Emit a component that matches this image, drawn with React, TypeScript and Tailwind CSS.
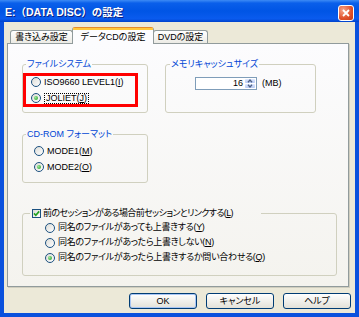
import type { ReactNode } from "react";

const font =
  "font-['Liberation_Sans','Noto_Sans_CJK_JP',sans-serif] [font-feature-settings:'palt']";

function Radio({ checked = false }: { checked?: boolean }) {
  return (
    <span className="flex h-[10px] w-[10px] shrink-0 items-center justify-center rounded-full border border-[#1C5180] bg-gradient-to-br from-[#DCDCD7] to-white">
      {checked && (
        <span className="h-[4px] w-[4px] rounded-full bg-[radial-gradient(circle_at_35%_35%,#9BE89B,#1D9A1D)]" />
      )}
    </span>
  );
}

function Option({
  checked,
  children,
  className = "",
  tight,
}: {
  checked?: boolean;
  children: ReactNode;
  className?: string;
  tight?: boolean;
}) {
  return (
    <div className={`flex items-center gap-[3px] ${className}`}>
      <Radio checked={checked} />
      <span
        className={`whitespace-nowrap text-[9px] leading-[11px] ${tight ? "tracking-[-0.3px]" : ""}`}
      >
        {children}
      </span>
    </div>
  );
}

function Legend({ children }: { children: ReactNode }) {
  return (
    <legend className="ml-[3px] px-[1px] text-[9px] leading-[11px] text-[#0046D5] whitespace-nowrap">
      {children}
    </legend>
  );
}

function Spin({ up }: { up?: boolean }) {
  return (
    <span className="flex flex-1 items-center justify-center rounded-[1px] bg-gradient-to-b from-[#E1EAFE] to-[#B6C9F5]">
      <svg width="6" height="4" viewBox="0 0 6 4">
        <path
          d={up ? "M1 3.2 L3 1 L5 3.2" : "M1 0.8 L3 3 L5 0.8"}
          fill="none"
          stroke="#4D6185"
          strokeWidth="1.3"
        />
      </svg>
    </span>
  );
}

function Button({ children, primary }: { children: ReactNode; primary?: boolean }) {
  return (
    <button
      className={`flex h-[16px] w-[68px] items-center justify-center rounded-[3px] border border-[#003C74] bg-gradient-to-b from-white to-[#E3E1D8] text-[9px] leading-none text-black ${
        primary ? "shadow-[inset_0_0_0_1px_#A9C6F5]" : ""
      }`}
    >
      {children}
    </button>
  );
}

export default function App() {
  return (
    <div className={`flex h-[317px] w-[359px] flex-col bg-[#0A51DD] ${font}`}>
      {/* title bar */}
      <div className="flex h-[22px] shrink-0 items-start justify-between bg-[linear-gradient(to_bottom,#3D8BF5_0%,#0A5FEA_14%,#0055E5_50%,#0A5BEE_85%,#0042CC_100%)] pl-[5px] pr-[5px]">
        <span className="mt-[6px] text-[10.5px] font-bold leading-[12px] text-white [font-feature-settings:normal] [text-shadow:1px_1px_0_#0A1E80]">
          E:（DATA DISC）の設定
        </span>
        <span className="mt-[5px] flex h-[16px] w-[16px] items-center justify-center rounded-[3px] border border-white bg-[radial-gradient(circle_at_30%_30%,#F5A58A,#E0502A_60%,#C43A18)]">
          <svg width="8" height="8" viewBox="0 0 8 8">
            <path d="M1 1 L7 7 M7 1 L1 7" stroke="white" strokeWidth="1.8" />
          </svg>
        </span>
      </div>

      <div className="mx-[4px] mb-[4px] flex flex-1 flex-col bg-[#ECE9D8]">
        {/* tabs */}
        <div className="relative z-10 flex h-[21px] items-end pl-[6px]">
          <div className="flex h-[13px] w-[63px] items-center justify-center rounded-t-[3px] border-x border-t border-[#919B9C] bg-gradient-to-b from-white to-[#ECEBE5] text-[9px] leading-none">
            書き込み設定
          </div>
          <div className="relative z-10 -mb-px -ml-px flex h-[17px] w-[82px] flex-col rounded-t-[3px] border-x border-t border-[#919B9C] border-t-[#E68B2C] bg-[#FCFCFE]">
            <div className="h-[2px] bg-[#FFC83C]" />
            <div className="flex flex-1 items-center justify-center text-[9px] leading-none">
              データCDの設定
            </div>
          </div>
          <div className="-ml-px flex h-[13px] w-[55px] items-center justify-center rounded-t-[3px] border-x border-t border-[#919B9C] bg-gradient-to-b from-white to-[#ECEBE5] text-[9px] leading-none">
            DVDの設定
          </div>
        </div>

        {/* panel */}
        <div className="relative ml-[3px] h-[244px] w-[342px] border border-[#919B9C] bg-gradient-to-b from-[#FCFCFE] to-[#F4F3EE] shadow-[1px_1px_0_#D0CEBF]">
          <div className="pl-[14px] pt-[15px]">
            <div className="flex gap-[17px]">
              <fieldset className="h-[54px] w-[126px] rounded-[3px] border border-[#D0D0BF]">
                <Legend>ファイルシステム</Legend>
                <div className="pl-[8px] pt-[4px]">
                  <Option className="h-[16px]">
                    ISO9660 LEVEL1(<u>I</u>)
                  </Option>
                  <div className="flex h-[16px] items-center gap-[3px]">
                    <Radio checked />
                    <span className="border border-dotted border-black px-[1px] text-[9px] leading-[9px] whitespace-nowrap">
                      JOLIET(<u>J</u>)
                    </span>
                  </div>
                </div>
              </fieldset>

              <fieldset className="h-[54px] w-[151px] rounded-[3px] border border-[#D0D0BF]">
                <legend className="ml-[4px] px-[1px] text-[9px] leading-[11px] text-[#0046D5] whitespace-nowrap">
                  メモリキャッシュサイズ
                </legend>
                <div className="flex items-center gap-[5px] pl-[29px] pt-[7px]">
                  <div className="flex h-[13px] w-[62px] border border-[#7F9DB9] bg-white">
                    <span className="flex-1 pr-[2px] text-right text-[9px] leading-[11px]">16</span>
                    <div className="flex w-[11px] flex-col gap-px p-px pl-0">
                      <Spin up />
                      <Spin />
                    </div>
                  </div>
                  <span className="text-[9px] leading-[11px]">(MB)</span>
                </div>
              </fieldset>
            </div>

            <fieldset className="mt-[16px] h-[54px] w-[126px] rounded-[3px] border border-[#D0D0BF]">
              <Legend>CD-ROM フォーマット</Legend>
              <div className="pl-[11px] pt-[3px]">
                <Option className="h-[16px]">
                  MODE1(<u>M</u>)
                </Option>
                <Option className="h-[16px]" checked>
                  MODE2(<u>O</u>)
                </Option>
              </div>
            </fieldset>

            <fieldset className="mt-[25px] h-[68px] w-[315px] rounded-[3px] border border-[#D0D0BF]">
              <legend className="ml-[7px] w-[231px] pl-[2px]">
                <span className="flex h-[11px] items-center gap-[2px]">
                  <span className="flex h-[9px] w-[9px] shrink-0 items-center justify-center border border-[#1C5180] bg-gradient-to-br from-[#DCDCD7] to-white">
                    <svg width="7" height="7" viewBox="0 0 7 7">
                      <path d="M1 3.4 L2.8 5.3 L6.2 1.4" fill="none" stroke="#21A121" strokeWidth="1.6" />
                    </svg>
                  </span>
                  <span className="whitespace-nowrap text-[9px] leading-[11px] tracking-[-0.6px] font-['Liberation_Sans','Noto_Sans_CJK_JP',sans-serif] [font-feature-settings:'palt']">
                    前のセッションがある場合前セッションとリンクする(<u>L</u>)
                  </span>
                </span>
              </legend>
              <div className="pl-[22px] pt-[1px]">
                <Option className="h-[15px]" tight>
                  同名のファイルがあっても上書きする(<u>Y</u>)
                </Option>
                <Option className="h-[15px]" tight>
                  同名のファイルがあったら上書きしない(<u>N</u>)
                </Option>
                <Option className="h-[15px]" checked tight>
                  同名のファイルがあったら上書きするか問い合わせる(<u>Q</u>)
                </Option>
              </div>
            </fieldset>
          </div>

          {/* highlight annotation */}
          <div className="absolute left-[15px] top-[29px] h-[34px] w-[115px] border-[3px] border-[#FF0000]" />
        </div>

        {/* buttons */}
        <div className="flex flex-1 items-start justify-end gap-[9px] pr-[4px] pt-[6px]">
          <Button primary>OK</Button>
          <Button>キャンセル</Button>
          <Button>ヘルプ</Button>
        </div>
      </div>
    </div>
  );
}
